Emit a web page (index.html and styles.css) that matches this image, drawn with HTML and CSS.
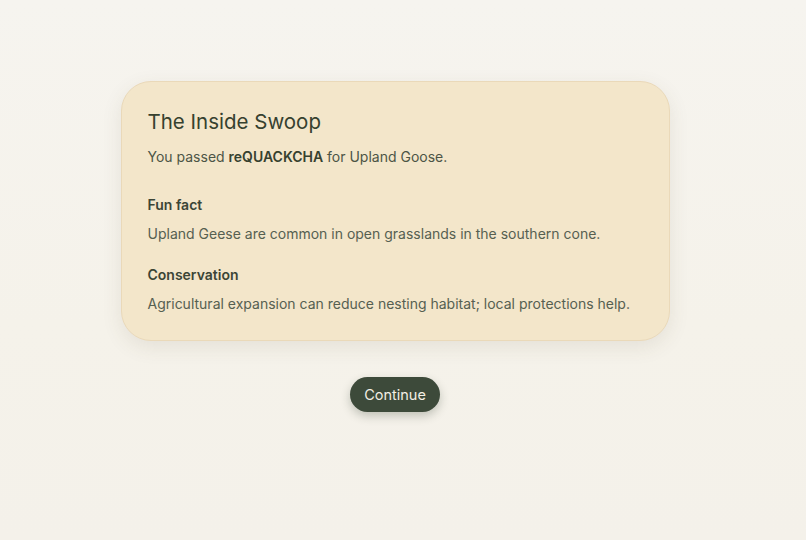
FILE: index.html
```html
<!DOCTYPE html>
<html lang="en">
<head>
  <meta charset="UTF-8" />
  <meta name="viewport" content="width=device-width, initial-scale=1.0"/>
  <title>reQUACKCHA</title>
  <link rel="stylesheet" href="styles.css">
</head>
<body>
  <main class="result">
    <section class="swoop-card">
      <h2 class="swoop-title">The Inside Swoop</h2>
      <p class="swoop-lead">You passed <strong>reQUACKCHA</strong> for Upland Goose.</p>

      <h3 class="swoop-label">Fun fact</h3>
      <p class="swoop-text">Upland Geese are common in open grasslands in the southern cone.</p>

      <h3 class="swoop-label">Conservation</h3>
      <p class="swoop-text">Agricultural expansion can reduce nesting habitat; local protections help.</p>
    </section>

    <button class="continue-btn" type="button">Continue</button>
  </main>
</body>
</html>
```

FILE: styles.css
```css
html, body {
  height: 100%;
}
body {
  margin: 0;
  font-family: Inter, "Noto Sans", sans-serif;
  color: #3b4536;
  background: linear-gradient(180deg, #f6f4ef 0%, #f5f2ea 60%, #f4f1ea 100%);
}
.result {
  display: flex;
  flex-direction: column;
  align-items: center;
  padding: 81px 16px 0 0;
}
.swoop-card {
  box-sizing: border-box;
  width: 549px;
  height: 260px;
  padding: 26px 26px;
  background: #f3e6ca;
  border: 1px solid #ead9b9;
  border-radius: 30px;
  box-shadow: 0 6px 20px rgba(90, 80, 50, 0.1);
}
.swoop-title {
  margin: 0 0 10px;
  font-size: 20.5px;
  font-weight: 400;
  line-height: 28px;
  color: #36412f;
}
.swoop-lead {
  margin: 0 0 26px;
  font-size: 14px;
  line-height: 22px;
  color: #4c5546;
}
.swoop-lead strong {
  font-weight: 600;
  color: #36412f;
}
.swoop-label {
  margin: 0 0 7px;
  font-size: 14px;
  font-weight: 600;
  line-height: 22px;
  color: #3b4536;
}
.swoop-text {
  margin: 0 0 19px;
  font-size: 14px;
  line-height: 22px;
  color: #566051;
}
.continue-btn {
  margin-top: 36px;
  height: 35px;
  padding: 0 14px;
  border: none;
  border-radius: 18px;
  background: #3d4a3a;
  color: #f3efe4;
  font-family: inherit;
  font-size: 14.5px;
  box-shadow: 0 4px 10px rgba(40, 50, 35, 0.25);
}
```
